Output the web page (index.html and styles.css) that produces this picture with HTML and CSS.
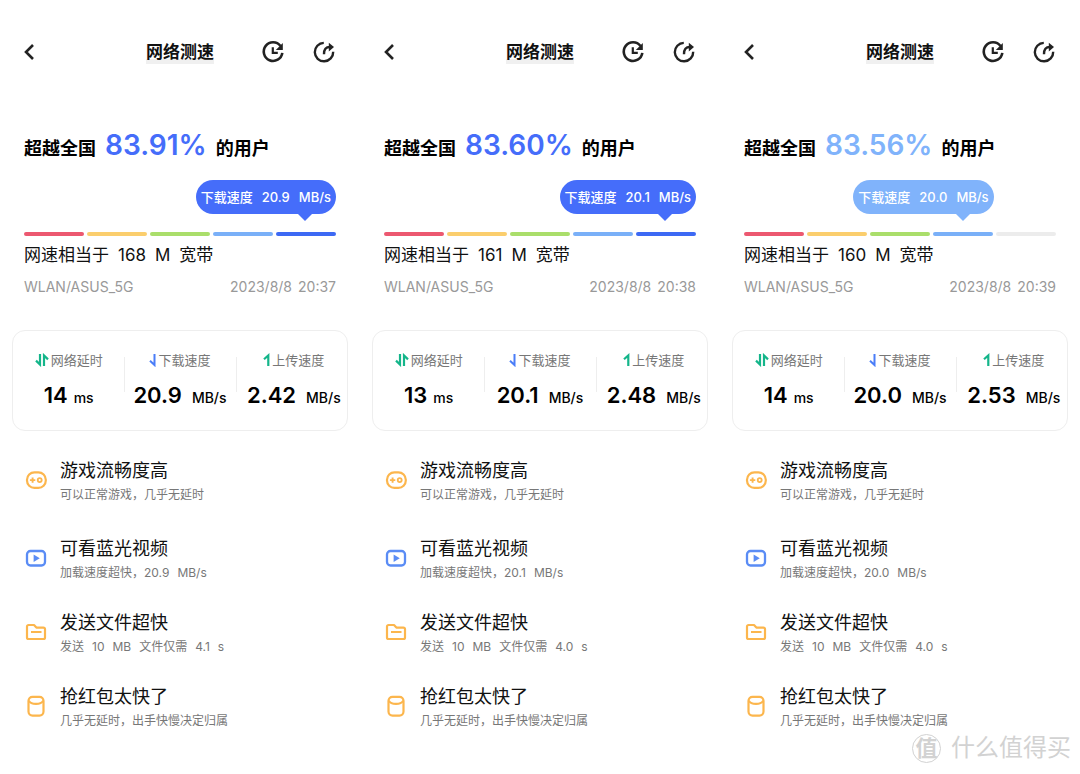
FILE: index.html
```html
<!DOCTYPE html>
<html lang="zh-CN">
<head>
<meta charset="utf-8">
<meta name="viewport" content="width=device-width, initial-scale=1">
<title>网络测速</title>
<link rel="stylesheet" href="styles.css">
</head>
<body>
<svg class="sprite" aria-hidden="true">
  <symbol id="i-back" viewBox="0 0 24 24"><path d="M16 5 9 12l7 7" fill="none" stroke="currentColor" stroke-width="2.600"/></symbol>
  <symbol id="i-history" viewBox="0 0 24 24"><g fill="none" stroke="currentColor" stroke-width="2.600"><path d="M19.500 6A9.300 9.300 0 1 0 21.300 12.800"/><path d="M11.800 7.200v5.600h5" stroke-width="2.200"/></g><path d="M21.800 2.900v7h-7z" fill="currentColor"/></symbol>
  <symbol id="i-share" viewBox="0 0 24 24"><g fill="none" stroke="currentColor" stroke-width="2.400"><path d="M11.800 2.900A9.200 9.200 0 1 0 21.200 11.800"/><path d="M12 14.300c-.1-5 1.800-7.300 6-7.300"/></g><path d="M16.800 2.700 22 7l-5.200 4.400z" fill="currentColor"/></symbol>
  <symbol id="i-delay" viewBox="0 0 14 14"><path d="M5 1v10.500L1 7.600M9 13V2.500l4 3.900" fill="none" stroke="#14b58a" stroke-width="2.200"/></symbol>
  <symbol id="i-down" viewBox="0 0 7 14"><path d="M5.500 1v11L1 7.700" fill="none" stroke="#4a7df8" stroke-width="2"/></symbol>
  <symbol id="i-up" viewBox="0 0 7 14"><path d="M5.300 13V2.500L1 6.300" fill="none" stroke="#14b58a" stroke-width="2.200"/></symbol>
  <symbol id="i-game" viewBox="0 0 24 24"><g fill="none" stroke="#fcb64d" stroke-width="2.200"><rect x="3" y="4.300" width="18.800" height="15.600" rx="7.400"/><path d="M5.900 12.100h5.400M8.600 9.400v5.400" stroke-width="1.900"/><circle cx="15.700" cy="12.100" r="2" stroke-width="1.800"/></g></symbol>
  <symbol id="i-video" viewBox="0 0 24 24"><rect x="3" y="5" width="18" height="14.500" rx="3.500" fill="none" stroke="#5a8cf5" stroke-width="2.300"/><path d="M9.600 8.500v7.400l6.200-3.700z" fill="#5a8cf5"/></symbol>
  <symbol id="i-file" viewBox="0 0 24 24"><path d="M4.500 5H10l2.400 2.600H19.500a1.500 1.500 0 0 1 1.500 1.500v8.400a1.500 1.500 0 0 1-1.500 1.500h-15A1.500 1.500 0 0 1 3 17.500v-11A1.500 1.500 0 0 1 4.500 5zM7 12h10.500" fill="none" stroke="#fcb64d" stroke-width="2.200" stroke-linejoin="round"/></symbol>
  <symbol id="i-packet" viewBox="0 0 24 24"><g fill="none" stroke="#fcb64d" stroke-width="2.200"><rect x="4.500" y="2.800" width="15" height="18.800" rx="4"/><path d="M4.800 6.800c2.400 4.200 12 4.200 14.400 0"/></g></symbol>
</svg>

<main class="screens">
  <article class="screen">
    <header class="bar">
      <button class="icon-btn" aria-label="返回"><svg><use href="#i-back"/></svg></button>
      <h1 class="bar-title">网络测速</h1>
      <div class="bar-actions">
        <button class="icon-btn" aria-label="历史"><svg><use href="#i-history"/></svg></button>
        <button class="icon-btn" aria-label="分享"><svg><use href="#i-share"/></svg></button>
      </div>
    </header>
    <section class="summary">
      <h2 class="rank"><span>超越全国</span><strong>83.91%</strong><span>的用户</span></h2>
      <div class="bubble-row"><p class="bubble"><span>下载速度</span><span>20.9</span><span>MB/s</span></p></div>
      <div class="scale"><i class="seg red"></i><i class="seg yellow"></i><i class="seg green"></i><i class="seg sky"></i><i class="seg blue"></i></div>
      <p class="band"><span>网速相当于</span><span>168</span><span>M</span><span>宽带</span></p>
      <p class="meta"><span>WLAN/ASUS_5G</span><time><span>2023/8/8</span><span>20:37</span></time></p>
    </section>
    <dl class="card">
      <div class="metric short"><dt><svg class="wide"><use href="#i-delay"/></svg>网络延时</dt><dd><b>14</b><span>ms</span></dd></div>
      <div class="metric"><dt><svg><use href="#i-down"/></svg>下载速度</dt><dd><b>20.9</b><span>MB/s</span></dd></div>
      <div class="metric upload"><dt><svg><use href="#i-up"/></svg>上传速度</dt><dd><b>2.42</b><span>MB/s</span></dd></div>
    </dl>
    <ul class="list">
      <li class="roomy"><svg><use href="#i-game"/></svg><div><h3>游戏流畅度高</h3><p>可以正常游戏，几乎无延时</p></div></li>
      <li><svg><use href="#i-video"/></svg><div><h3>可看蓝光视频</h3><p><span>加载速度超快，20.9</span><span>MB/s</span></p></div></li>
      <li><svg><use href="#i-file"/></svg><div><h3>发送文件超快</h3><p><span>发送</span><span>10</span><span>MB</span><span>文件仅需</span><span>4.1</span><span>s</span></p></div></li>
      <li><svg><use href="#i-packet"/></svg><div><h3>抢红包太快了</h3><p>几乎无延时，出手快慢决定归属</p></div></li>
    </ul>
  </article>

  <article class="screen">
    <header class="bar">
      <button class="icon-btn" aria-label="返回"><svg><use href="#i-back"/></svg></button>
      <h1 class="bar-title">网络测速</h1>
      <div class="bar-actions">
        <button class="icon-btn" aria-label="历史"><svg><use href="#i-history"/></svg></button>
        <button class="icon-btn" aria-label="分享"><svg><use href="#i-share"/></svg></button>
      </div>
    </header>
    <section class="summary">
      <h2 class="rank"><span>超越全国</span><strong>83.60%</strong><span>的用户</span></h2>
      <div class="bubble-row"><p class="bubble"><span>下载速度</span><span>20.1</span><span>MB/s</span></p></div>
      <div class="scale"><i class="seg red"></i><i class="seg yellow"></i><i class="seg green"></i><i class="seg sky"></i><i class="seg blue"></i></div>
      <p class="band"><span>网速相当于</span><span>161</span><span>M</span><span>宽带</span></p>
      <p class="meta"><span>WLAN/ASUS_5G</span><time><span>2023/8/8</span><span>20:38</span></time></p>
    </section>
    <dl class="card">
      <div class="metric short"><dt><svg class="wide"><use href="#i-delay"/></svg>网络延时</dt><dd><b>13</b><span>ms</span></dd></div>
      <div class="metric"><dt><svg><use href="#i-down"/></svg>下载速度</dt><dd><b>20.1</b><span>MB/s</span></dd></div>
      <div class="metric upload"><dt><svg><use href="#i-up"/></svg>上传速度</dt><dd><b>2.48</b><span>MB/s</span></dd></div>
    </dl>
    <ul class="list">
      <li class="roomy"><svg><use href="#i-game"/></svg><div><h3>游戏流畅度高</h3><p>可以正常游戏，几乎无延时</p></div></li>
      <li><svg><use href="#i-video"/></svg><div><h3>可看蓝光视频</h3><p><span>加载速度超快，20.1</span><span>MB/s</span></p></div></li>
      <li><svg><use href="#i-file"/></svg><div><h3>发送文件超快</h3><p><span>发送</span><span>10</span><span>MB</span><span>文件仅需</span><span>4.0</span><span>s</span></p></div></li>
      <li><svg><use href="#i-packet"/></svg><div><h3>抢红包太快了</h3><p>几乎无延时，出手快慢决定归属</p></div></li>
    </ul>
  </article>

  <article class="screen level-four">
    <header class="bar">
      <button class="icon-btn" aria-label="返回"><svg><use href="#i-back"/></svg></button>
      <h1 class="bar-title">网络测速</h1>
      <div class="bar-actions">
        <button class="icon-btn" aria-label="历史"><svg><use href="#i-history"/></svg></button>
        <button class="icon-btn" aria-label="分享"><svg><use href="#i-share"/></svg></button>
      </div>
    </header>
    <section class="summary">
      <h2 class="rank"><span>超越全国</span><strong>83.56%</strong><span>的用户</span></h2>
      <div class="bubble-row"><p class="bubble"><span>下载速度</span><span>20.0</span><span>MB/s</span></p></div>
      <div class="scale"><i class="seg red"></i><i class="seg yellow"></i><i class="seg green"></i><i class="seg sky"></i><i class="seg empty"></i></div>
      <p class="band"><span>网速相当于</span><span>160</span><span>M</span><span>宽带</span></p>
      <p class="meta"><span>WLAN/ASUS_5G</span><time><span>2023/8/8</span><span>20:39</span></time></p>
    </section>
    <dl class="card">
      <div class="metric short"><dt><svg class="wide"><use href="#i-delay"/></svg>网络延时</dt><dd><b>14</b><span>ms</span></dd></div>
      <div class="metric"><dt><svg><use href="#i-down"/></svg>下载速度</dt><dd><b>20.0</b><span>MB/s</span></dd></div>
      <div class="metric upload"><dt><svg><use href="#i-up"/></svg>上传速度</dt><dd><b>2.53</b><span>MB/s</span></dd></div>
    </dl>
    <ul class="list">
      <li class="roomy"><svg><use href="#i-game"/></svg><div><h3>游戏流畅度高</h3><p>可以正常游戏，几乎无延时</p></div></li>
      <li><svg><use href="#i-video"/></svg><div><h3>可看蓝光视频</h3><p><span>加载速度超快，20.0</span><span>MB/s</span></p></div></li>
      <li><svg><use href="#i-file"/></svg><div><h3>发送文件超快</h3><p><span>发送</span><span>10</span><span>MB</span><span>文件仅需</span><span>4.0</span><span>s</span></p></div></li>
      <li><svg><use href="#i-packet"/></svg><div><h3>抢红包太快了</h3><p>几乎无延时，出手快慢决定归属</p></div></li>
    </ul>
  </article>
</main>
<div class="watermark"><span class="seal">值</span><span>什么值得买</span></div>
</body>
</html>
```
FILE: styles.css
```css
* { box-sizing: border-box; }
body, h1, h2, h3, p, dl, dd, ul { margin: 0; padding: 0; }
body {
  position: relative;
  min-height: 100vh;
  background: #fff;
  color: #111;
  font-family: Inter, "Noto Sans CJK SC", sans-serif;
}
.sprite { display: none; }
.screens { display: grid; grid-template-columns: repeat(3, minmax(0, 1fr)); }
.screen { --accent: #456dfa; padding: 32px 12px 8px; }
.level-four { --accent: #80b3fb; }

.bar {
  display: grid;
  grid-template-columns: 1fr auto 1fr;
  align-items: center;
  height: 40px;
  padding: 0 12px 0 5px;
}
.icon-btn { display: flex; padding: 0; border: 0; background: none; color: #222; }
.icon-btn svg { width: 24px; height: 24px; }
.bar-title {
  margin-left: 7px;
  font-size: 17px;
  line-height: 24px;
  font-weight: 700;
  background: linear-gradient(#f0f0f0, #f0f0f0) 0 100% / 100% 5px no-repeat;
}
.bar-actions { display: flex; justify-content: flex-end; gap: 27px; }

.summary { padding: 53px 12px 0; }
.rank {
  display: flex;
  align-items: baseline;
  gap: 9px;
  font-size: 18px;
  line-height: 40px;
  font-weight: 700;
  color: #000;
}
.rank strong { font-size: 28px; font-weight: 600; color: var(--accent); }
.bubble-row { display: flex; justify-content: flex-end; margin-top: 11px; }
.level-four .bubble-row { padding-right: 20%; }
.bubble {
  position: relative;
  display: flex;
  gap: 9px;
  padding: 0 5px;
  border-radius: 17px;
  background: var(--accent);
  color: #fff;
  font-size: 13px;
  line-height: 34px;
  font-weight: 500;
}
.bubble::after {
  content: "";
  position: absolute;
  right: 24px;
  top: 100%;
  border: 7px solid transparent;
  border-top-color: var(--accent);
  border-bottom: 0;
}
.scale { display: flex; gap: 3px; margin-top: 18px; }
.seg { flex: 1; height: 4px; border-radius: 2px; }
.red { background: #ec5870; }
.yellow { background: #fbce6d; }
.green { background: #aade6b; }
.sky { background: #7ab0f8; }
.blue { background: #3d69f4; }
.empty { background: #ececec; }
.band { display: flex; gap: 9px; margin-top: 7px; font-size: 17px; line-height: 24px; }
.meta {
  display: flex;
  justify-content: space-between;
  margin-top: 10px;
  font-size: 14px;
  line-height: 20px;
  color: #999;
}
.meta time { display: flex; gap: 6px; }

.card {
  display: grid;
  grid-template-columns: repeat(3, 1fr);
  margin-top: 33px;
  padding: 19px 0 16px;
  border: 1px solid #eee;
  border-radius: 13px;
}
.metric {
  display: flex;
  flex-direction: column;
  align-items: center;
  background: linear-gradient(#eee, #eee) 0 7px / 1px 35px no-repeat;
}
.metric:first-child { background: none; }
.upload { padding-left: 5px; }
.metric dt {
  display: flex;
  align-items: center;
  gap: 2px;
  font-size: 13px;
  line-height: 20px;
  color: #777;
}
.metric dt svg { width: 7px; height: 14px; }
.metric dt .wide { width: 14px; }
.metric dd {
  display: flex;
  align-items: baseline;
  gap: 10px;
  margin-top: 9px;
  font-size: 14px;
  line-height: 32px;
  font-weight: 500;
  color: #000;
  white-space: nowrap;
}
.short dd { gap: 6px; }
.metric b { font-size: 22px; font-weight: 600; }

.list { padding: 26px 12px 0; list-style: none; }
.list li { display: flex; align-items: center; gap: 12px; padding-bottom: 26px; }
.list .roomy { padding-bottom: 30px; }
.list svg { width: 24px; height: 24px; flex: none; margin-bottom: 2px; }
.list h3 { font-size: 18px; line-height: 28px; font-weight: 400; }
.list p { display: flex; gap: 8px; font-size: 12px; line-height: 20px; color: #777; }

.watermark {
  position: absolute;
  right: 9px;
  bottom: 10px;
  display: flex;
  align-items: center;
  gap: 10px;
  color: #d2d2d2;
  font-size: 24px;
  line-height: 32px;
}
.seal {
  width: 29px;
  height: 29px;
  border: 1px solid #d2d2d2;
  border-radius: 50%;
  font-size: 22px;
  line-height: 26px;
  font-weight: 700;
  text-align: center;
}
```
